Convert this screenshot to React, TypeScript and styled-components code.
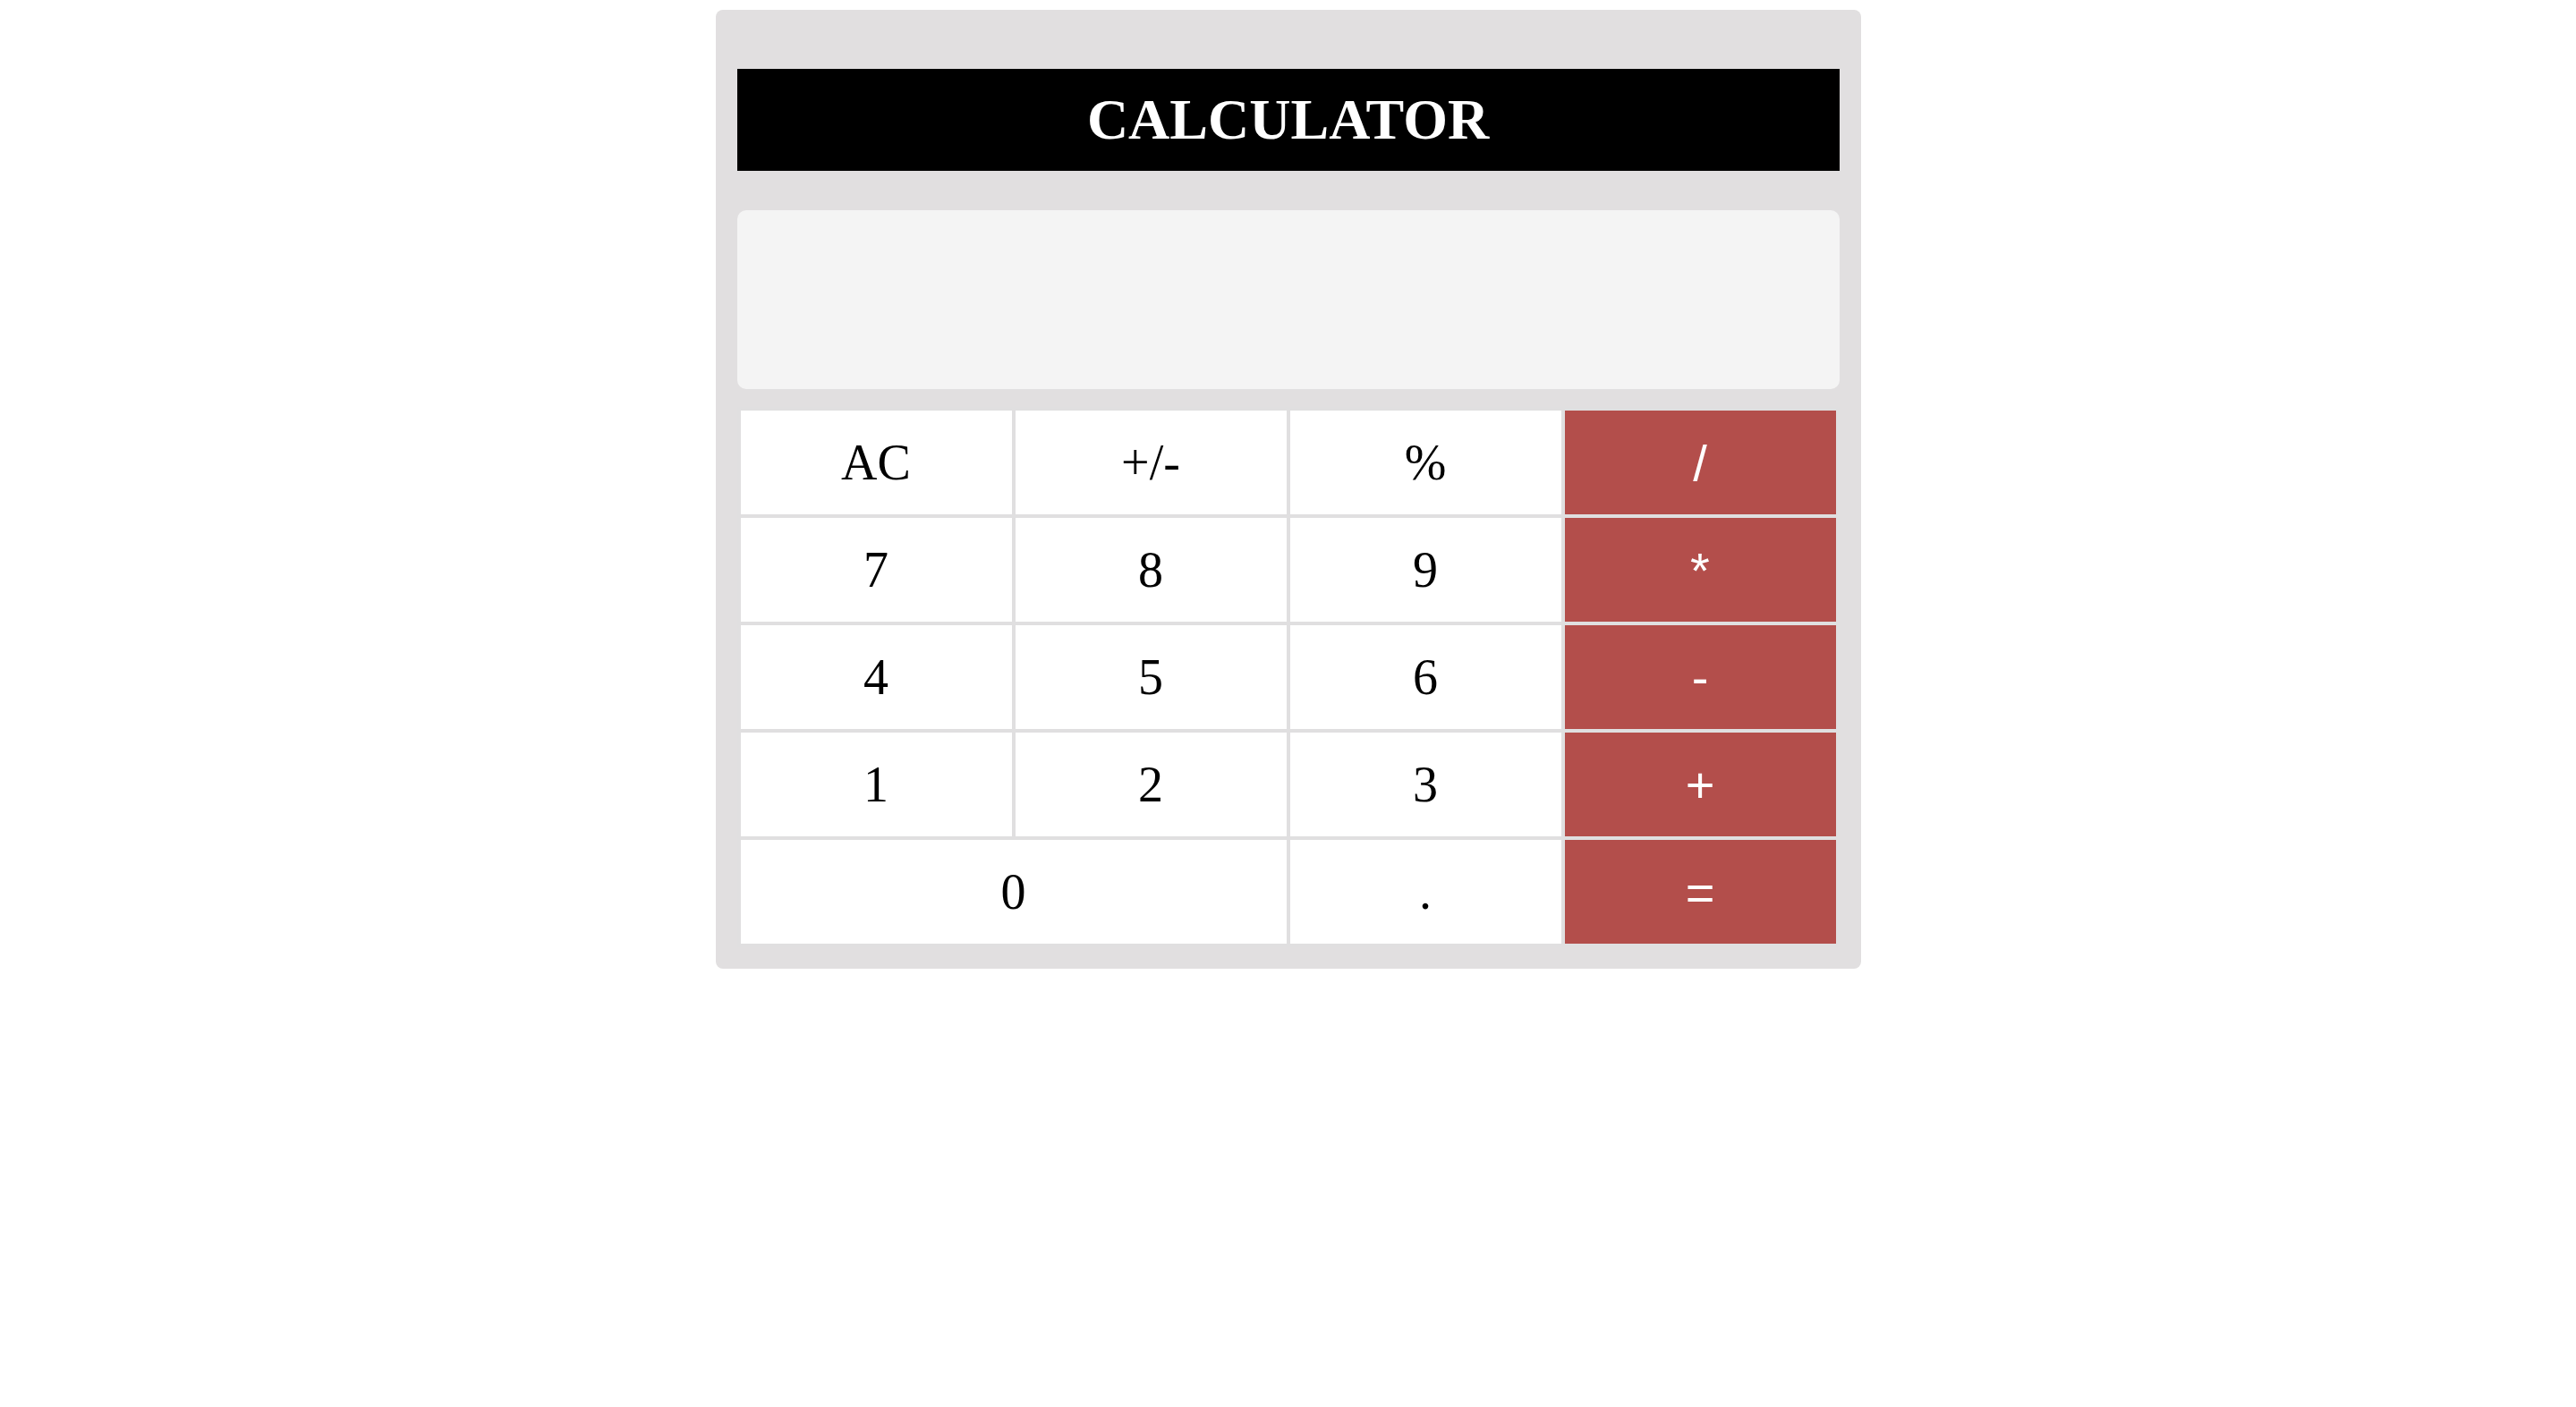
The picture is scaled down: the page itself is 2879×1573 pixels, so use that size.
import React from "react";
import styled, { createGlobalStyle } from "styled-components";

const GlobalStyle = createGlobalStyle`
  html, body {
    margin: 0;
    padding: 0;
    background: #ffffff;
    font-family: "Liberation Serif", "Times New Roman", serif;
  }
  * { box-sizing: border-box; }
`;

const Calculator = styled.div`
  width: 1280px;
  margin: 11px auto 0;
  padding: 66px 24px 24px;
  background: #e1dfe0;
  border-radius: 8px;
  display: flex;
  flex-direction: column;
`;

const Title = styled.h1`
  margin: 0 0 44px;
  height: 114px;
  background: #000000;
  color: #ffffff;
  font-family: "Liberation Serif", "Times New Roman", serif;
  font-weight: 700;
  font-size: 64px;
  line-height: 114px;
  text-align: center;
`;

const Display = styled.div`
  height: 200px;
  margin-bottom: 20px;
  background: #f4f4f4;
  border-radius: 10px;
`;

const Keypad = styled.div`
  display: grid;
  grid-template-columns: repeat(4, 1fr);
  grid-auto-rows: 116px;
  gap: 4px;
  padding: 4px;
  background: #e0dfe0;
`;

const Key = styled.button<{ $op?: boolean; $span?: number }>`
  border: none;
  margin: 0;
  padding: 0;
  grid-column: span ${(p) => p.$span ?? 1};
  background: ${(p) => (p.$op ? "#b34e4b" : "#ffffff")};
  color: ${(p) => (p.$op ? "#ffffff" : "#000000")};
  font-family: ${(p) =>
    p.$op
      ? `"Liberation Sans", Arial, sans-serif`
      : `"Liberation Serif", "Times New Roman", serif`};
  font-size: 56px;
  line-height: normal;
  display: flex;
  align-items: center;
  justify-content: center;
  cursor: pointer;
`;

type K = { label: string; op?: boolean; span?: number };

const keys: K[] = [
  { label: "AC" },
  { label: "+/-" },
  { label: "%" },
  { label: "/", op: true },
  { label: "7" },
  { label: "8" },
  { label: "9" },
  { label: "*", op: true },
  { label: "4" },
  { label: "5" },
  { label: "6" },
  { label: "-", op: true },
  { label: "1" },
  { label: "2" },
  { label: "3" },
  { label: "+", op: true },
  { label: "0", span: 2 },
  { label: "." },
  { label: "=", op: true },
];

export default function App() {
  return (
    <>
      <GlobalStyle />
      <Calculator>
        <Title>CALCULATOR</Title>
        <Display />
        <Keypad>
          {keys.map((k) => (
            <Key key={k.label} $op={k.op} $span={k.span}>
              {k.label}
            </Key>
          ))}
        </Keypad>
      </Calculator>
    </>
  );
}
